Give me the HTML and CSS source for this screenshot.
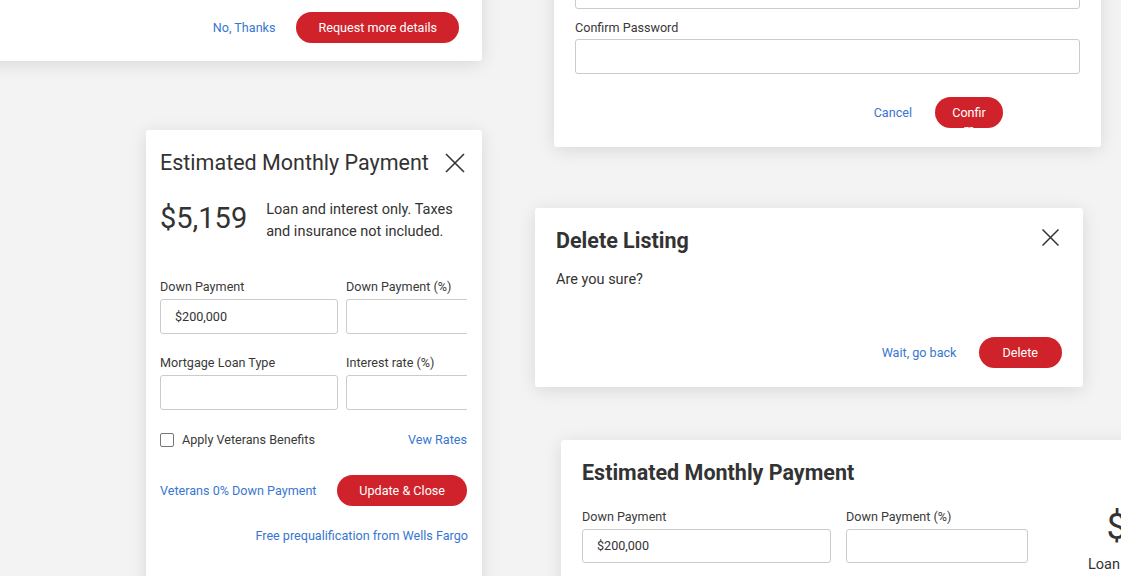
FILE: index.html
```html
<!DOCTYPE html>
<html lang="en">
<head>
<meta charset="utf-8">
<title>Modals</title>
<link rel="stylesheet" href="styles.css">
</head>
<body>
<div class="canvas">

  <section class="card card-request">
    <div class="footer">
      <a class="link" href="#">No, Thanks</a>
      <button class="btn">Request more details</button>
    </div>
  </section>

  <section class="card card-password">
    <div class="field">
      <label class="label">Password</label>
      <div class="input input-wide"></div>
    </div>
    <div class="field field-confirm">
      <label class="label">Confirm Password</label>
      <div class="input input-wide"></div>
    </div>
    <div class="footer footer-password">
      <a class="link" href="#">Cancel</a>
      <button class="btn btn-narrow">Confirm</button>
    </div>
  </section>

  <section class="card card-payment">
    <div class="header">
      <h2 class="title-light">Estimated Monthly Payment</h2>
      <svg class="close" width="24" height="24" viewBox="0 0 24 24"><path d="M3 3 L21 21 M21 3 L3 21" stroke="#333" stroke-width="1.6" fill="none"/></svg>
    </div>
    <div class="amount-row">
      <div class="amount">$5,159</div>
      <p class="amount-note">Loan and interest only. Taxes and insurance not included.</p>
    </div>
    <div class="form-clip">
      <div class="form-grid">
        <div class="field">
          <label class="label">Down Payment</label>
          <div class="input">$200,000</div>
        </div>
        <div class="field">
          <label class="label">Down Payment (%)</label>
          <div class="input"></div>
        </div>
        <div class="field">
          <label class="label">Mortgage Loan Type</label>
          <div class="input"></div>
        </div>
        <div class="field">
          <label class="label">Interest rate (%)</label>
          <div class="input"></div>
        </div>
      </div>
    </div>
    <div class="check-row">
      <label class="check"><span class="box"></span>Apply Veterans Benefits</label>
      <a class="link" href="#">Vew Rates</a>
    </div>
    <div class="action-row">
      <a class="link" href="#">Veterans 0% Down Payment</a>
      <button class="btn">Update &amp; Close</button>
    </div>
    <div class="prequal">
      <a class="link" href="#">Free prequalification from Wells Fargo</a>
    </div>
  </section>

  <section class="card card-delete">
    <div class="header">
      <h2 class="title-bold">Delete Listing</h2>
      <svg class="close-small" width="17" height="17" viewBox="0 0 17 17"><path d="M0.5 0.5 L16.5 16.5 M16.5 0.5 L0.5 16.5" stroke="#333" stroke-width="1.5" fill="none"/></svg>
    </div>
    <p class="body-text">Are you sure?</p>
    <div class="footer footer-delete">
      <a class="link" href="#">Wait, go back</a>
      <button class="btn btn-delete">Delete</button>
    </div>
  </section>

  <section class="card card-payment-wide">
    <h2 class="title-bold">Estimated Monthly Payment</h2>
    <div class="wide-body">
      <div class="wide-form">
        <div class="field">
          <label class="label">Down Payment</label>
          <div class="input input-thin">$200,000</div>
        </div>
        <div class="field">
          <label class="label">Down Payment (%)</label>
          <div class="input input-thin"></div>
        </div>
      </div>
      <div class="divider"></div>
      <div class="wide-summary">
        <div class="big-amount">$5,159</div>
        <p class="summary-note">Loan and interest only.</p>
      </div>
    </div>
  </section>

</div>
</body>
</html>
```
FILE: styles.css
```css
* { box-sizing: border-box; }

html, body {
  margin: 0;
  padding: 0;
}

body {
  background: #f3f3f3;
  font-family: Roboto, "Liberation Sans", Arial, sans-serif;
  color: #333;
}

.canvas {
  position: relative;
  width: 1121px;
  height: 576px;
  overflow: hidden;
  background: #f3f3f3;
}

.card {
  position: absolute;
  background: #fff;
  border-radius: 3px;
  box-shadow: 0 3px 18px rgba(0, 0, 0, 0.11);
}

h2, p { margin: 0; font-weight: normal; }

.link {
  color: #3877d1;
  text-decoration: none;
  font-size: 12.6px;
  line-height: 15px;
  white-space: nowrap;
}

.btn {
  font-family: inherit;
  background: #cf222a;
  color: #fff;
  border: 0;
  border-radius: 16px;
  height: 31px;
  padding: 0 22px;
  font-size: 12.6px;
  white-space: nowrap;
}

.label {
  display: block;
  font-size: 12.6px;
  line-height: 15px;
  color: #3a3a3a;
  white-space: nowrap;
}

.input {
  margin-top: 5px;
  height: 35px;
  border: 1px solid #cbcbcb;
  border-radius: 3px;
  background: #fff;
  padding: 0 14px;
  font-size: 12.6px;
  line-height: 33px;
  color: #333;
}

.footer {
  display: flex;
  align-items: center;
  justify-content: flex-end;
  gap: 21px;
}

/* Card 1 */
.card-request {
  left: -40px;
  top: -60px;
  width: 522px;
  height: 121px;
  display: flex;
  flex-direction: column;
  justify-content: flex-end;
  padding: 0 23px 18px;
}

/* Card 2 */
.card-password {
  left: 554px;
  top: -80px;
  width: 547px;
  height: 227px;
  display: flex;
  flex-direction: column;
  justify-content: flex-end;
  padding: 0 21px 19px;
}
.field-confirm { margin-top: 11px; }
.card-password .field-confirm .input { margin-top: 4px; }
.footer-password {
  margin-top: 23px;
  padding-right: 77px;
  gap: 23px;
}
.btn-narrow {
  width: 68px;
  padding: 7px 14px 0;
  white-space: normal;
  overflow-wrap: anywhere;
  overflow: hidden;
  line-height: 17px;
  text-align: center;
  display: block;
}

/* Card 3 */
.card-payment {
  left: 146px;
  top: 130px;
  width: 336px;
  height: 470px;
  padding: 21px 15px 0 14px;
}
.header {
  display: flex;
  justify-content: space-between;
  align-items: center;
}
.title-light {
  font-size: 21.5px;
  line-height: 24px;
  color: #333;
  white-space: nowrap;
}
.amount-row {
  display: flex;
  gap: 19px;
  margin-top: 24px;
}
.amount {
  font-size: 29px;
  line-height: 38px;
  color: #333;
  white-space: nowrap;
}
.amount-note {
  font-size: 14.5px;
  line-height: 22px;
  color: #333;
}
.form-clip {
  margin-top: 36px;
  overflow: hidden;
}
.form-grid {
  display: grid;
  grid-template-columns: 178px 178px;
  column-gap: 8px;
  row-gap: 21px;
  width: 364px;
}
.check-row {
  margin-top: 22px;
  display: flex;
  justify-content: space-between;
  align-items: center;
}
.check {
  display: flex;
  align-items: center;
  gap: 8px;
  font-size: 12.6px;
  line-height: 15px;
  color: #3a3a3a;
}
.box {
  width: 14px;
  height: 14px;
  border: 1px solid #777;
  border-radius: 2px;
}
.action-row {
  margin-top: 28px;
  display: flex;
  justify-content: space-between;
  align-items: center;
}
.prequal {
  margin-top: 19px;
  text-align: right;
  margin-right: -1px;
}

/* Card 4 */
.card-delete {
  left: 535px;
  top: 208px;
  width: 548px;
  height: 179px;
  padding: 21px 24px 19px 21px;
  display: flex;
  flex-direction: column;
}
.card-delete .header { align-items: flex-start; }
.close-small { margin-top: 0; }
.title-bold {
  font-size: 21.5px;
  line-height: 24px;
  font-weight: 700;
  color: #333;
  white-space: nowrap;
}
.body-text {
  margin-top: 19px;
  font-size: 14.5px;
  line-height: 16px;
  color: #333;
}
.footer-delete {
  margin-top: auto;
  margin-right: -3px;
  gap: 22px;
}
.btn-delete { padding: 0 24px; }

/* Card 5 */
.card-payment-wide {
  left: 561px;
  top: 440px;
  width: 620px;
  height: 200px;
  padding: 21px 21px;
}
.wide-body {
  display: flex;
  margin-top: 18px;
}
.wide-form {
  display: grid;
  grid-template-columns: 249px 182px;
  column-gap: 15px;
  padding-top: 6px;
}
.input-thin { height: 34px; line-height: 32px; }
.divider {
  width: 1px;
  height: 100px;
  background: #d9d9d9;
  margin-left: 22px;
}
.wide-summary {
  width: 184px;
  margin-left: 38px;
  text-align: center;
  padding-top: 3px;
}
.big-amount {
  font-size: 36px;
  line-height: 42px;
  color: #333;
  white-space: nowrap;
}
.summary-note {
  margin-top: 7px;
  font-size: 14.5px;
  line-height: 20px;
  color: #333;
  white-space: nowrap;
}
```
